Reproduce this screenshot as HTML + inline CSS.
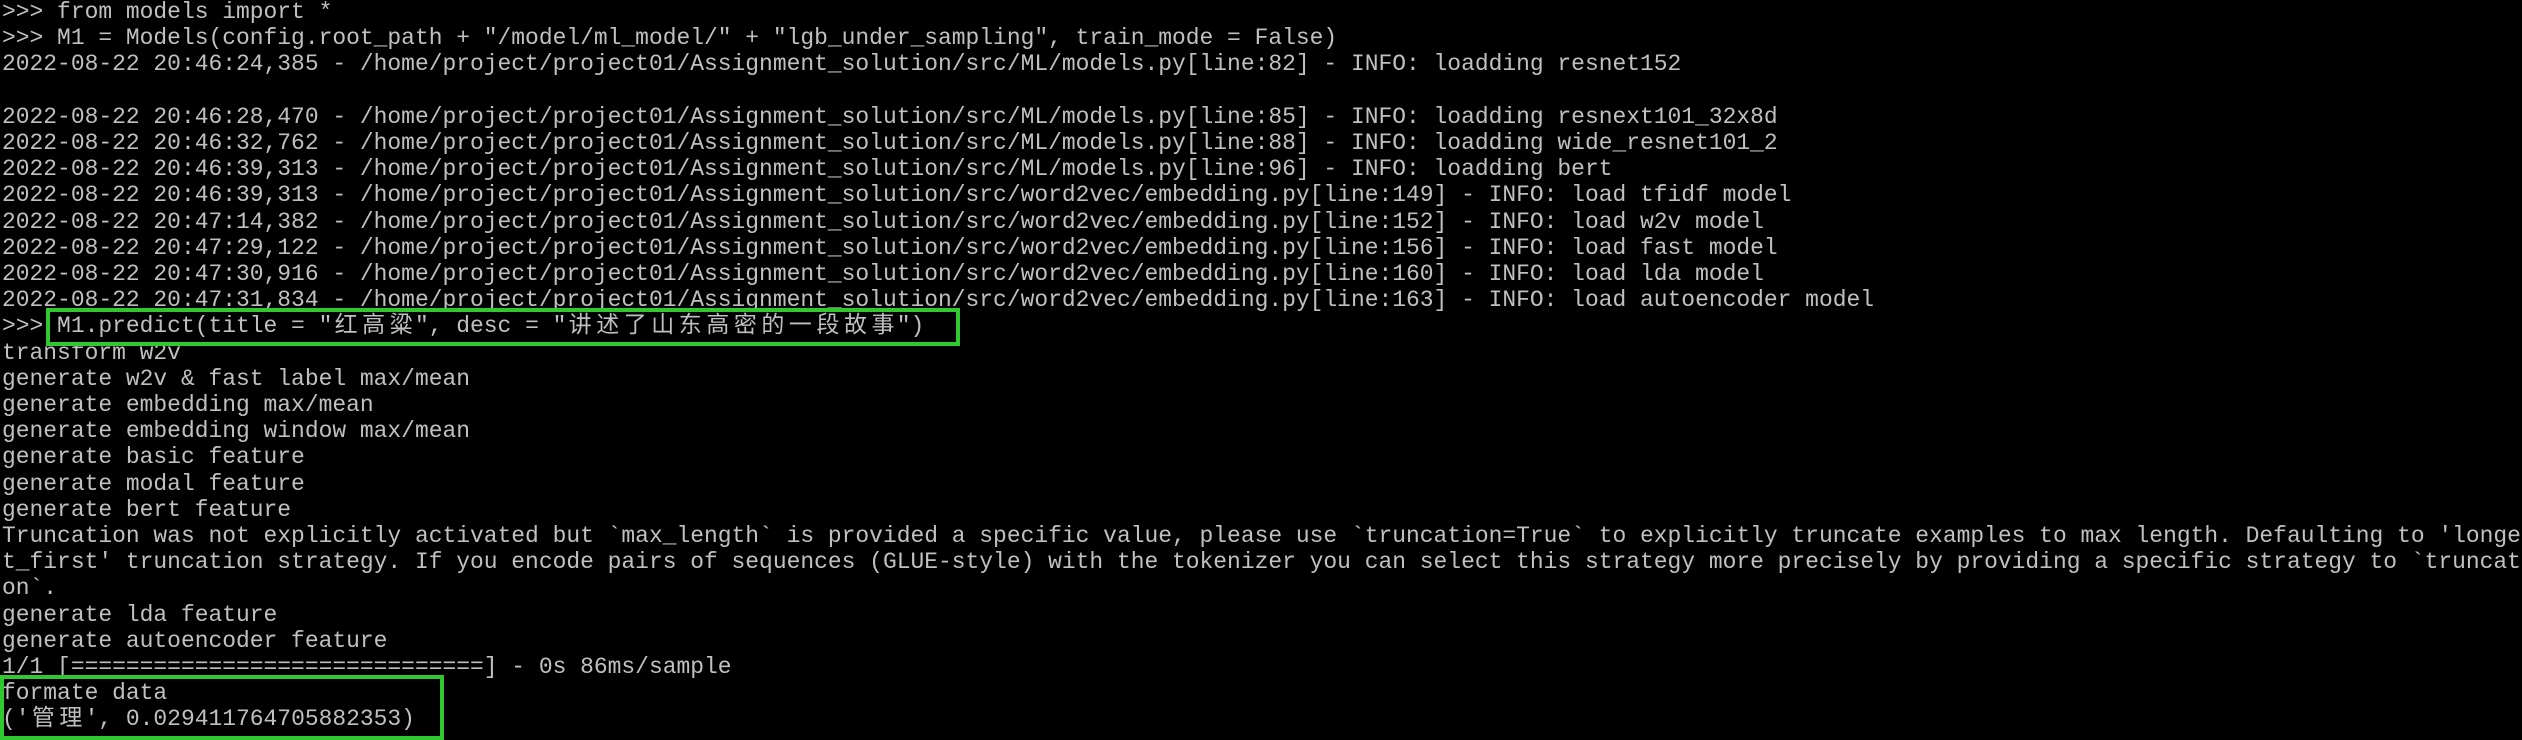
<!DOCTYPE html>
<html><head><meta charset="utf-8"><style>
html,body{margin:0;padding:0;background:#000;width:2522px;height:740px;overflow:hidden;}
pre{margin:0;position:absolute;left:2px;top:-1px;font-family:"Liberation Mono","Noto Sans CJK SC",monospace;font-size:22.95px;line-height:26.2px;color:#c0c0c0;white-space:pre;}
.c{display:inline-block;width:1.2em;text-align:center;}
.box{position:absolute;border:4px solid #2fc92f;box-sizing:border-box;}
</style></head><body>
<pre>&gt;&gt;&gt; from models import *
&gt;&gt;&gt; M1 = Models(config.root_path + "/model/ml_model/" + "lgb_under_sampling", train_mode = False)
2022-08-22 20:46:24,385 - /home/project/project01/Assignment_solution/src/ML/models.py[line:82] - INFO: loadding resnet152

2022-08-22 20:46:28,470 - /home/project/project01/Assignment_solution/src/ML/models.py[line:85] - INFO: loadding resnext101_32x8d
2022-08-22 20:46:32,762 - /home/project/project01/Assignment_solution/src/ML/models.py[line:88] - INFO: loadding wide_resnet101_2
2022-08-22 20:46:39,313 - /home/project/project01/Assignment_solution/src/ML/models.py[line:96] - INFO: loadding bert
2022-08-22 20:46:39,313 - /home/project/project01/Assignment_solution/src/word2vec/embedding.py[line:149] - INFO: load tfidf model
2022-08-22 20:47:14,382 - /home/project/project01/Assignment_solution/src/word2vec/embedding.py[line:152] - INFO: load w2v model
2022-08-22 20:47:29,122 - /home/project/project01/Assignment_solution/src/word2vec/embedding.py[line:156] - INFO: load fast model
2022-08-22 20:47:30,916 - /home/project/project01/Assignment_solution/src/word2vec/embedding.py[line:160] - INFO: load lda model
2022-08-22 20:47:31,834 - /home/project/project01/Assignment_solution/src/word2vec/embedding.py[line:163] - INFO: load autoencoder model
&gt;&gt;&gt; M1.predict(title = "<span class="c">红</span><span class="c">高</span><span class="c">粱</span>", desc = "<span class="c">讲</span><span class="c">述</span><span class="c">了</span><span class="c">山</span><span class="c">东</span><span class="c">高</span><span class="c">密</span><span class="c">的</span><span class="c">一</span><span class="c">段</span><span class="c">故</span><span class="c">事</span>")
transform w2v
generate w2v &amp; fast label max/mean
generate embedding max/mean
generate embedding window max/mean
generate basic feature
generate modal feature
generate bert feature
Truncation was not explicitly activated but `max_length` is provided a specific value, please use `truncation=True` to explicitly truncate examples to max length. Defaulting to 'longes
t_first' truncation strategy. If you encode pairs of sequences (GLUE-style) with the tokenizer you can select this strategy more precisely by providing a specific strategy to `truncati
on`.
generate lda feature
generate autoencoder feature
1/1 [==============================] - 0s 86ms/sample
formate data
('<span class="c">管</span><span class="c">理</span>', 0.029411764705882353)</pre>
<div class="box" style="left:46px;top:308px;width:914px;height:38px;"></div>
<div class="box" style="left:0px;top:675px;width:444px;height:65px;"></div>
</body></html>
